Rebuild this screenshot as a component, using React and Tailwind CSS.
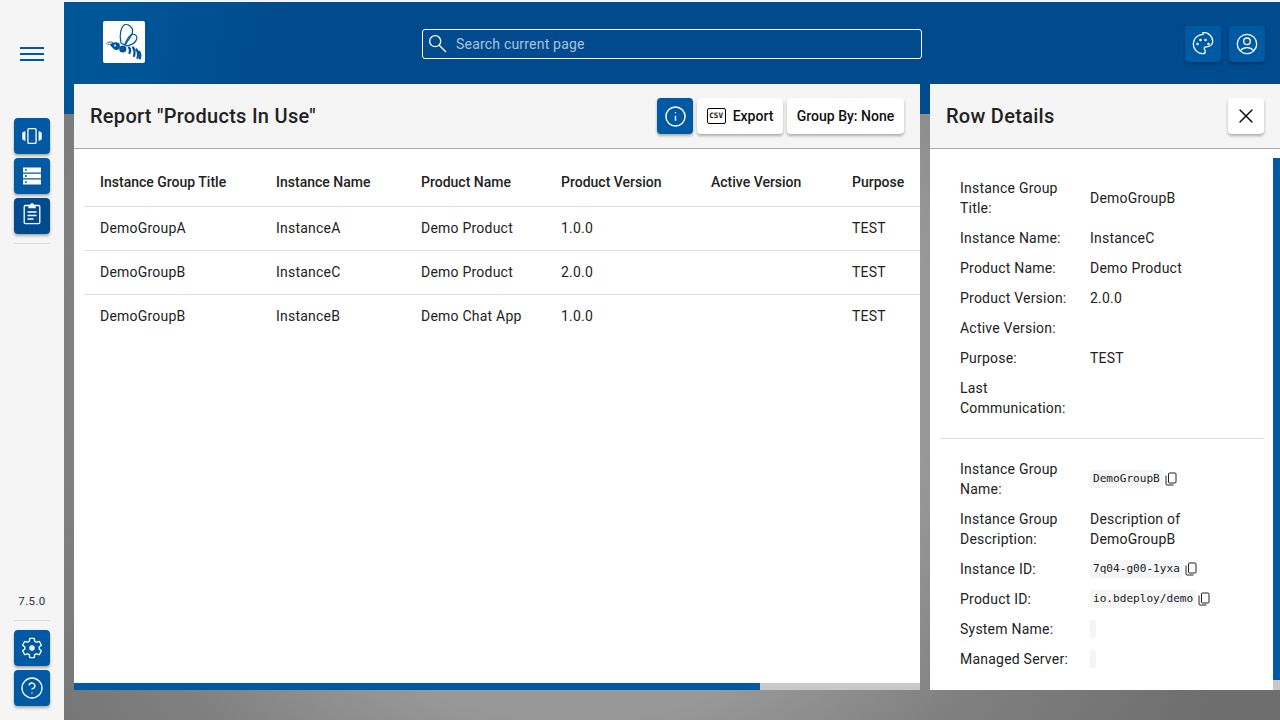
import { CircleHelp, Info, X } from 'lucide-react';

const COLUMNS = [
  { label: 'Instance Group Title', width: 'w-[176px]' },
  { label: 'Instance Name', width: 'w-[145px]' },
  { label: 'Product Name', width: 'w-[140px]' },
  { label: 'Product Version', width: 'w-[150px]' },
  { label: 'Active Version', width: 'w-[141px]' },
  { label: 'Purpose', width: 'w-[68px]' },
];

const ROWS = [
  ['DemoGroupA', 'InstanceA', 'Demo Product', '1.0.0', '', 'TEST'],
  ['DemoGroupB', 'InstanceC', 'Demo Product', '2.0.0', '', 'TEST'],
  ['DemoGroupB', 'InstanceB', 'Demo Chat App', '1.0.0', '', 'TEST'],
];

function InstancesIcon() {
  return (
    <svg viewBox="0 0 24 24" className="h-6 w-6" fill="none" stroke="currentColor" strokeWidth="1.3">
      <rect x="7.9" y="4.6" width="8.200" height="14.800" rx="1.200" />
      <path d="M5.400 7.200C3.400 7.500 2.300 8.300 2.300 9.300v5.400c0 1 1.100 1.800 3.100 2.100z" fill="currentColor" stroke="none" />
      <path d="M18.600 7.200c2 .3 3.100 1.100 3.100 2.100v5.400c0 1-1.100 1.800-3.100 2.100z" fill="currentColor" stroke="none" />
    </svg>
  );
}

function StorageIcon() {
  return (
    <svg viewBox="0 0 18 18" className="h-[18px] w-[18px]" fill="currentColor">
      <path
        fillRule="evenodd"
        d="M0 .5h18v5H0zM2 2.300v1.400h2V2.300zM0 6.800h18v4.400H0zM2 8.300v1.400h2V8.300zM0 12.500h18v5H0zM2 14.300v1.400h2v-1.400z"
      />
    </svg>
  );
}

function ClipboardIcon() {
  return (
    <svg viewBox="0 0 24 24" className="mb-1 h-6 w-6" fill="none" stroke="currentColor" strokeWidth="1.300">
      <path d="M9 3.500H5.300c-.7 0-1.100.4-1.100 1.100v16c0 .7.4 1.100 1.100 1.100h13.400c.7 0 1.100-.4 1.100-1.100v-16c0-.7-.4-1.100-1.100-1.100H15" />
      <path d="M9 5.500V3.300h1.600a1.400 1.400 0 0 1 2.800 0H15v2.200z" fill="currentColor" />
      <path d="M7.500 10h9M7.500 13.500h9M7.500 17h6" />
    </svg>
  );
}

function GearIcon() {
  return (
    <svg viewBox="0 0 24 24" className="h-6 w-6" fill="none" stroke="currentColor" strokeWidth="1.300">
      <path d="M19.140 12.940c.04-.3.06-.61.06-.94 0-.32-.02-.64-.07-.94l2.030-1.580c.18-.14.23-.41.12-.61l-1.920-3.320c-.12-.22-.37-.29-.59-.22l-2.390.96c-.5-.38-1.030-.7-1.620-.94l-.36-2.540c-.04-.24-.24-.41-.48-.41h-3.840c-.24 0-.43.17-.47.41l-.36 2.540c-.59.24-1.130.57-1.620.94l-2.390-.96c-.22-.08-.47 0-.59.22L2.740 8.870c-.12.21-.08.47.12.61l2.030 1.580c-.05.3-.09.63-.09.94s.02.64.07.94l-2.030 1.580c-.18.14-.23.41-.12.61l1.920 3.320c.12.22.37.29.59.22l2.390-.96c.5.38 1.030.7 1.620.94l.36 2.540c.05.24.24.41.48.41h3.840c.24 0 .44-.17.47-.41l.36-2.540c.59-.24 1.130-.56 1.620-.94l2.390.96c.22.08.47 0 .59-.22l1.920-3.320c.12-.22.07-.47-.12-.61l-2.010-1.580z" />
      <circle cx="12" cy="12" r="2.700" fill="currentColor" stroke="none" />
    </svg>
  );
}

function PaletteIcon() {
  return (
    <svg viewBox="0 0 24 24" className="h-6 w-6" fill="none" stroke="currentColor" strokeWidth="1.300">
      <path d="M12 2.300C6.600 2.300 2.300 6.600 2.300 12s4.300 9.700 9.700 9.700c1.300 0 2.300-1 2.300-2.300 0-.6-.2-1.100-.6-1.500-.3-.4-.5-.8-.5-1.300 0-1 .8-1.800 1.800-1.800H16c3.200 0 5.700-2.500 5.700-5.600 0-4.800-4.300-8.900-9.700-8.900z" />
      <g fill="currentColor" stroke="none">
        <circle cx="6.500" cy="12" r="1.250" />
        <circle cx="9.500" cy="8" r="1.250" />
        <circle cx="14.500" cy="8" r="1.250" />
        <circle cx="17.500" cy="12" r="1.250" />
      </g>
    </svg>
  );
}

function AccountIcon() {
  return (
    <svg viewBox="0 0 24 24" className="h-6 w-6" fill="none" stroke="currentColor" strokeWidth="1.300">
      <circle cx="12" cy="12" r="9.700" />
      <circle cx="12" cy="9.300" r="3.300" />
      <path d="M5.300 18.700c1.700-2 4.200-3.100 6.700-3.100s5 1.100 6.700 3.100" />
    </svg>
  );
}

function SearchIcon() {
  return (
    <svg viewBox="0 0 18 18" className="h-[18px] w-[18px] text-white" fill="none" stroke="currentColor" strokeWidth="1.300">
      <circle cx="6.200" cy="6.200" r="5.500" />
      <path d="M10.200 10.200L17 17" />
    </svg>
  );
}

function CopyIcon() {
  return (
    <svg viewBox="0 0 12 14" className="ml-[2px] h-[14px] w-[12px]" fill="none" stroke="#222" strokeWidth="1">
      <rect x="3.500" y="1" width="7.500" height="10" rx="1" />
      <path d="M1 3.500v8.500c0 .6.400 1 1 1h6.500" />
    </svg>
  );
}

function BeeLogo() {
  return (
    <svg viewBox="0 0 42 42" className="h-[42px] w-[42px]" fill="none" stroke="#00549f">
      <path d="M18 22C16 14 18 6 21.500 3.800C25 2.600 29 5.500 29.700 9.500C30 13 25.500 19 22 24Z" strokeWidth="1.200" />
      <path d="M22 23C24 18 27 14 29.700 13.300C32.500 13 34.300 15 33.800 17.500C33 21 29 24 23.700 25Z" strokeWidth="1.200" />
      <circle cx="19.800" cy="28" r="3.600" fill="#00549f" stroke="none" />
      <path d="M7 24C9.500 21 13.500 20.500 16.500 22.500L17 26C16.500 28 15 29.500 12.500 29C10.500 28.500 9 26 7 24Z" fill="#00549f" stroke="none" />
      <circle cx="12" cy="24.500" r="1.100" fill="#fff" stroke="none" />
      <path d="M3.500 22.500C5 21 7.500 20.500 10 21.500M4.500 24C6 23 7.500 23 9 23.500" strokeWidth=".9" />
      <path d="M26 26.500Q28 29 26.500 32M30 26.500Q32.500 30 31 35M33.500 28.500Q36 32 34.500 37M36.500 31Q38 34 37 37.500" strokeWidth="2.200" strokeLinecap="round" />
    </svg>
  );
}

function RailButton({ icon, dark = false }) {
  return (
    <button
      type="button"
      className={`flex h-9 w-9 items-center justify-center rounded-[4px] text-white shadow-[0_2px_3px_rgba(0,0,0,0.3)] ${dark ? 'bg-[#004b8f]' : 'bg-[#005aa3]'}`}
    >
      {icon}
    </button>
  );
}

function Rail() {
  return (
    <aside className="flex h-full w-16 shrink-0 flex-col items-center bg-[#f5f5f5] pt-[47px] pb-[14px]">
      <div className="flex w-6 flex-col gap-[4px]">
        <div className="h-[2px] bg-[#005aa3]" />
        <div className="h-[2px] bg-[#005aa3]" />
        <div className="h-[2px] bg-[#005aa3]" />
      </div>
      <div className="mt-[57px] flex flex-col gap-1">
        <RailButton icon={<InstancesIcon />} />
        <RailButton icon={<StorageIcon />} />
        <RailButton dark icon={<ClipboardIcon />} />
      </div>
      <div className="mt-[9px] h-px w-9 bg-[#dcdcdc]" />
      <div className="mt-auto text-[11.5px] leading-4 tracking-[0.4px] text-[#333]">7.5.0</div>
      <div className="mt-[11px] mb-[9px] h-px w-9 bg-[#dcdcdc]" />
      <div className="flex flex-col gap-1">
        <RailButton icon={<GearIcon />} />
        <RailButton icon={<CircleHelp className="h-6 w-6" strokeWidth={1.3} />} />
      </div>
    </aside>
  );
}

function Header() {
  return (
    <header className="flex h-[112px] items-start bg-[linear-gradient(100deg,#005597_0%,#005597_6%,#004a8d_18%,#004a8d_100%)] pt-[19px]">
      <div className="ml-[39px] flex h-[42px] w-[42px] items-center justify-center rounded-[2px] bg-white">
        <BeeLogo />
      </div>
      <div className="ml-[277px] mt-2 flex h-[30px] w-[500px] items-center rounded-[3px] border border-white pl-[6px]">
        <SearchIcon />
        <span className="ml-[9px] text-sm tracking-[0.2px] text-[#a9c3de]">Search current page</span>
      </div>
      <div className="mt-[5px] ml-auto mr-[15px] flex gap-2">
        <button type="button" className="flex h-9 w-9 items-center justify-center rounded-[4px] bg-[#005aa3] text-white shadow-[0_2px_3px_rgba(0,0,0,0.25)]">
          <PaletteIcon />
        </button>
        <button type="button" className="flex h-9 w-9 items-center justify-center rounded-[4px] bg-[#005aa3] text-white shadow-[0_2px_3px_rgba(0,0,0,0.25)]">
          <AccountIcon />
        </button>
      </div>
    </header>
  );
}

function ToolButton({ children, className = '' }) {
  return (
    <button
      type="button"
      className={`flex h-9 items-center justify-center rounded-[4px] bg-white text-sm font-medium text-[#111] shadow-[0_2px_3px_rgba(0,0,0,0.3)] ${className}`}
    >
      {children}
    </button>
  );
}

function PanelTitle({ title, children }) {
  return (
    <div className="flex h-[65px] shrink-0 items-center justify-between border-b border-[#a8a8a8] bg-[#f5f5f5] pl-4 pr-4">
      <h2 className="text-xl font-medium tracking-[0.28px] text-[#222]">{title}</h2>
      <div className="flex gap-1">{children}</div>
    </div>
  );
}

function ReportPanel() {
  return (
    <section className="flex w-[846px] shrink-0 flex-col overflow-hidden bg-white">
      <PanelTitle title={'Report "Products In Use"'}>
        <button type="button" className="flex h-9 w-9 items-center justify-center rounded-[4px] bg-[#005aa3] text-white shadow-[0_2px_3px_rgba(0,0,0,0.3)]">
          <Info className="h-[23px] w-[23px]" strokeWidth={1.500} />
        </button>
        <ToolButton className="w-[86px] gap-[7px]">
          <span className="flex h-[16px] w-[19px] items-center justify-center rounded-[2px] border-[1.5px] border-black font-['DejaVu_Sans_Mono',monospace] text-[7.5px] font-bold leading-none">CSV</span>
          <span>Export</span>
        </ToolButton>
        <ToolButton className="w-[117px]">Group By: None</ToolButton>
      </PanelTitle>
      <div className="ml-[10px] mt-[11px] flex-1">
        <div className="flex h-[47px] items-center border-b border-[#dedede] pb-[2px] pl-4 text-sm font-medium text-[#222]">
          {COLUMNS.map((col) => (
            <div key={col.label} className={`shrink-0 ${col.width}`}>{col.label}</div>
          ))}
        </div>
        {ROWS.map((row, i) => (
          <div key={i} className="flex h-11 items-center border-b border-[#dedede] pb-[2px] pl-4 text-sm tracking-[0.22px] text-[#222] last:border-b-0">
            {row.map((cell, j) => (
              <div key={j} className={`shrink-0 ${COLUMNS[j].width}`}>{cell}</div>
            ))}
          </div>
        ))}
      </div>
      <div className="flex h-[7px] shrink-0 bg-[#c8c8c8]">
        <div className="w-[686px] bg-[#005aa3]" />
      </div>
    </section>
  );
}

function DetailRow({ label, children, height = 'h-[30px]' }) {
  return (
    <div className={`flex items-center text-sm leading-5 tracking-[0.22px] text-[#222] ${height}`}>
      <div className="w-[130px] shrink-0">{label}</div>
      <div className="flex min-w-0 items-center">{children}</div>
    </div>
  );
}

function CodeValue({ value, copy = true }) {
  return (
    <>
      <code className="flex h-[18px] min-w-[6px] items-center rounded-[2px] bg-[#f5f5f5] px-[3px] font-['DejaVu_Sans_Mono',monospace] text-[11.1px] tracking-normal text-[#222]">{value}</code>
      {copy && <CopyIcon />}
    </>
  );
}

function DetailsPanel() {
  return (
    <section className="flex w-[350px] shrink-0 flex-col overflow-hidden bg-white">
      <PanelTitle title="Row Details">
        <ToolButton className="w-9">
          <X className="h-6 w-6" strokeWidth={1.500} />
        </ToolButton>
      </PanelTitle>
      <div className="flex min-h-0 flex-1">
        <div className="min-w-0 flex-1 pl-[10px] pr-[9px] pt-[24px]">
          <div className="border-b border-[#dedede] pb-[15px] pl-5">
            <DetailRow label={<>Instance Group<br />Title:</>} height="h-[50px]">DemoGroupB</DetailRow>
            <DetailRow label="Instance Name:">InstanceC</DetailRow>
            <DetailRow label="Product Name:">Demo Product</DetailRow>
            <DetailRow label="Product Version:">2.0.0</DetailRow>
            <DetailRow label="Active Version:" />
            <DetailRow label="Purpose:">TEST</DetailRow>
            <DetailRow label={<>Last<br />Communication:</>} height="h-[50px]" />
          </div>
          <div className="pl-5 pt-[15px]">
            <DetailRow label={<>Instance Group<br />Name:</>} height="h-[50px]"><CodeValue value="DemoGroupB" /></DetailRow>
            <DetailRow label={<>Instance Group<br />Description:</>} height="h-[50px]"><span>Description of<br />DemoGroupB</span></DetailRow>
            <DetailRow label="Instance ID:"><CodeValue value="7q04-g00-1yxa" /></DetailRow>
            <DetailRow label="Product ID:"><CodeValue value="io.bdeploy/demo" /></DetailRow>
            <DetailRow label="System Name:"><CodeValue value="" copy={false} /></DetailRow>
            <DetailRow label="Managed Server:"><CodeValue value="" copy={false} /></DetailRow>
          </div>
        </div>
        <div className="mt-[9px] flex w-[7px] shrink-0 flex-col bg-[#c8c8c8]">
          <div className="h-[522px] bg-[#005aa3]" />
        </div>
      </div>
    </section>
  );
}

export default function App() {
  return (
    <div className="flex h-[720px] w-[1280px] overflow-hidden bg-[radial-gradient(circle_at_45%_50%,#9a9a9a_0px,#989898_360px,#808080_510px,#6e6e6e_720px)] font-['Roboto',sans-serif]">
      <Rail />
      <main className="flex min-w-0 flex-1 flex-col">
        <div className="h-[2px] shrink-0 bg-[#f5f5f5]" />
        <Header />
        <div className="relative z-10 mt-[-30px] ml-[10px] flex h-[606px] gap-[10px]">
          <ReportPanel />
          <DetailsPanel />
        </div>
      </main>
    </div>
  );
}
